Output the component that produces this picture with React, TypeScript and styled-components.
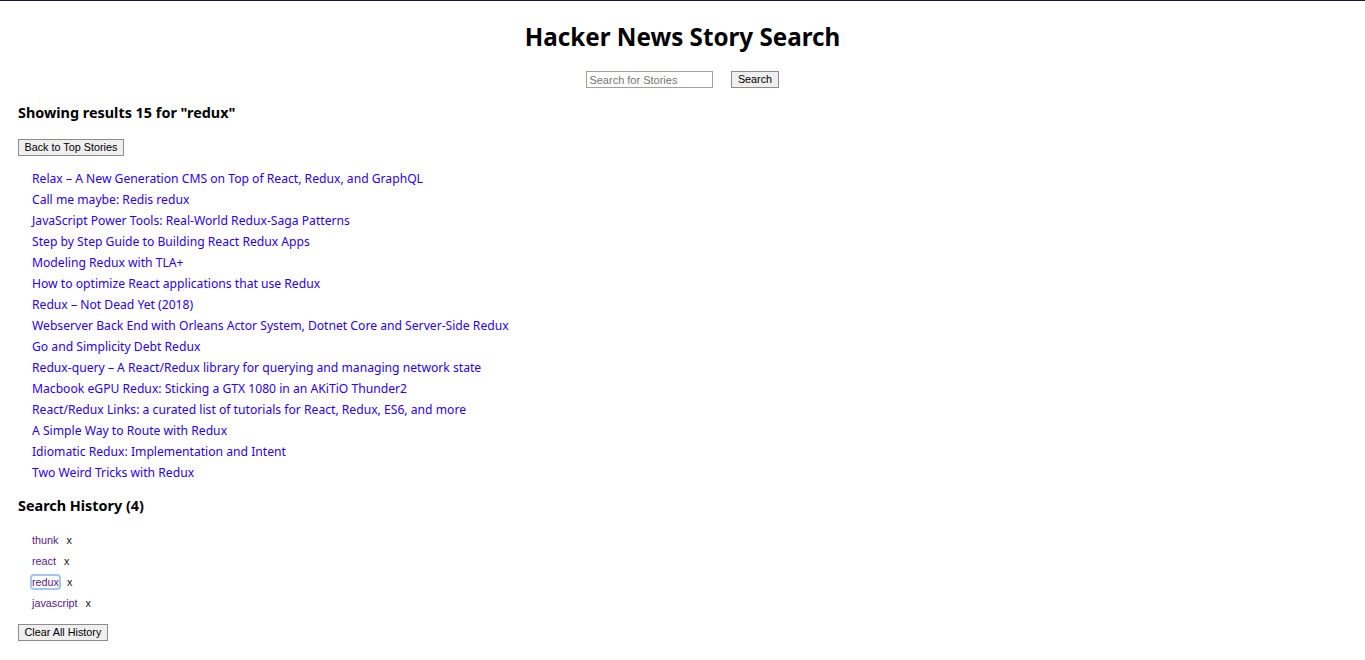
import React from "react";
import styled, { createGlobalStyle } from "styled-components";

const Global = createGlobalStyle`
  html, body { margin: 0; padding: 0; background: #ffffff; }
  body { border-top: 1px solid #1e1b3a; }
`;

const Page = styled.div`
  display: flex;
  flex-direction: column;
  align-items: stretch;
  padding: 0 18px 20px 18px;
  font-family: "Noto Sans", "Open Sans", sans-serif;
  color: #000;
`;

const Title = styled.h1`
  margin: 20px 0 0 0;
  text-align: center;
  font-family: "Noto Sans", sans-serif;
  font-size: 24.2px;
  line-height: 32px;
  font-weight: 700;
`;

const SearchRow = styled.form`
  margin-top: 18px;
  display: flex;
  justify-content: center;
  align-items: center;
  gap: 18px;
`;

const SearchInput = styled.input`
  box-sizing: border-box;
  width: 127px;
  height: 17px;
  padding: 0 2px;
  border: 1px solid #a0a0a0;
  font-family: "Liberation Sans", Arial, sans-serif;
  font-size: 11px;
  color: #000;
  &::placeholder { color: #757575; }
`;

const NativeButton = styled.button`
  box-sizing: border-box;
  height: 17px;
  padding: 0 5.5px;
  border: 1px solid #8c8c8c;
  border-radius: 0;
  background: #efefef;
  font-family: "Liberation Sans", Arial, sans-serif;
  font-size: 10.8px;
  line-height: 15px;
  color: #000;
  cursor: pointer;
`;

const Row = styled.div<{ $mt: number }>`
  margin-top: ${(p) => p.$mt}px;
  display: flex;
`;

const SectionHeading = styled.h3<{ $mt: number }>`
  margin: ${(p) => p.$mt}px 0 0 0;
  font-family: "Noto Sans", sans-serif;
  font-size: 14.4px;
  line-height: 20px;
  font-weight: 700;
`;

const StoryList = styled.ul`
  list-style: none;
  margin: 11px 0 0 0;
  padding: 0 0 0 14px;
  display: flex;
  flex-direction: column;
`;

const StoryItem = styled.li`
  height: 21px;
  line-height: 20px;
`;

const StoryLink = styled.a`
  font-family: "Noto Sans", sans-serif;
  font-size: 12.15px;
  color: #2a00ee;
  text-decoration: none;
`;

const HistoryList = styled.ul`
  list-style: none;
  margin: 13px 0 0 0;
  padding: 0 0 0 14px;
  display: flex;
  flex-direction: column;
`;

const HistoryItem = styled.li`
  height: 21px;
  display: flex;
  align-items: center;
  gap: 8px;
  font-family: "Liberation Sans", Arial, sans-serif;
  font-size: 10.8px;
`;

const HistoryLink = styled.a<{ $focused?: boolean }>`
  color: #551a8b;
  text-decoration: none;
  border-radius: 2px;
  ${(p) => (p.$focused ? "outline: 2px solid #a4c6f4; outline-offset: 0px;" : "")}
`;

const RemoveX = styled.span`
  color: #111;
  cursor: pointer;
`;

const stories = [
  "Relax – A New Generation CMS on Top of React, Redux, and GraphQL",
  "Call me maybe: Redis redux",
  "JavaScript Power Tools: Real-World Redux-Saga Patterns",
  "Step by Step Guide to Building React Redux Apps",
  "Modeling Redux with TLA+",
  "How to optimize React applications that use Redux",
  "Redux – Not Dead Yet (2018)",
  "Webserver Back End with Orleans Actor System, Dotnet Core and Server-Side Redux",
  "Go and Simplicity Debt Redux",
  "Redux-query – A React/Redux library for querying and managing network state",
  "Macbook eGPU Redux: Sticking a GTX 1080 in an AKiTiO Thunder2",
  "React/Redux Links: a curated list of tutorials for React, Redux, ES6, and more",
  "A Simple Way to Route with Redux",
  "Idiomatic Redux: Implementation and Intent",
  "Two Weird Tricks with Redux",
];

const history = ["thunk", "react", "redux", "javascript"];

export default function App() {
  return (
    <>
      <Global />
      <Page>
        <Title>Hacker News Story Search</Title>
        <SearchRow onSubmit={(e) => e.preventDefault()}>
          <SearchInput placeholder="Search for Stories" />
          <NativeButton type="submit">Search</NativeButton>
        </SearchRow>
        <SectionHeading $mt={15}>Showing results 15 for "redux"</SectionHeading>
        <Row $mt={16}>
          <NativeButton>Back to Top Stories</NativeButton>
        </Row>
        <StoryList>
          {stories.map((s) => (
            <StoryItem key={s}>
              <StoryLink href="#">{s}</StoryLink>
            </StoryItem>
          ))}
        </StoryList>
        <SectionHeading $mt={14}>Search History (4)</SectionHeading>
        <HistoryList>
          {history.map((h) => (
            <HistoryItem key={h}>
              <HistoryLink href="#" $focused={h === "redux"}>{h}</HistoryLink>
              <RemoveX>x</RemoveX>
            </HistoryItem>
          ))}
        </HistoryList>
        <Row $mt={11}>
          <NativeButton>Clear All History</NativeButton>
        </Row>
      </Page>
    </>
  );
}
